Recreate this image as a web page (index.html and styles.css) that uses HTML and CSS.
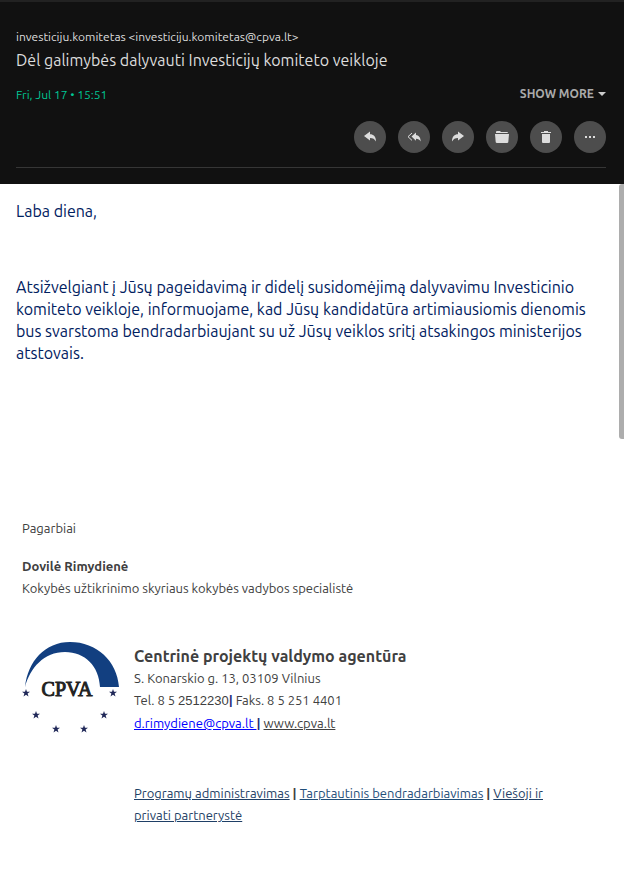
FILE: index.html
```html
<!DOCTYPE html>
<html lang="lt">
<head>
<meta charset="utf-8">
<meta name="viewport" content="width=device-width, initial-scale=1">
<title>Dėl galimybės dalyvauti Investicijų komiteto veikloje</title>
<link rel="stylesheet" href="styles.css">
</head>
<body>
<header class="header">
  <p class="sender">investiciju.komitetas &lt;investiciju.komitetas@cpva.lt&gt;</p>
  <h1 class="subject">Dėl galimybės dalyvauti Investicijų komiteto veikloje</h1>
  <div class="meta">
    <time class="date" datetime="15:51">Fri, Jul 17 • 15:51</time>
    <button class="more" type="button">SHOW MORE <svg width="8" height="4" viewBox="0 0 8 4" aria-hidden="true"><path d="M0 0H8L4 4Z"/></svg></button>
  </div>
  <div class="actions">
    <button class="action" type="button" aria-label="Reply"><svg viewBox="0 0 16 16" aria-hidden="true"><path d="M2 7 8 2.500V5.200C11.500 5.200 14 7.500 14 12.500 12.500 10 11 9 8 9V11.500Z"/></svg></button>
    <button class="action" type="button" aria-label="Reply all"><svg viewBox="0 0 16 16" aria-hidden="true"><path d="M5.500 7.500 10 3.500V6C12.500 6.200 14.500 8 14.800 12.500 13.500 10.500 12.300 9.700 10 9.700V11.700Z"/><path class="chevron" d="M6 4 2 7.700 6 11.400"/></svg></button>
    <button class="action" type="button" aria-label="Forward"><svg viewBox="0 0 16 16" aria-hidden="true"><path d="M14 7 8 2.500V5.200C4.500 5.200 2 7.500 2 12.500 3.500 10 5 9 8 9V11.500Z"/></svg></button>
    <button class="action" type="button" aria-label="Move to folder"><svg viewBox="0 0 16 16" aria-hidden="true"><path d="M2 4V3Q2 2 3 2H6L7 3H13Q14 3 14 4Z"/><path d="M1 5H15L14.300 13Q14.200 14 13 14H3Q1.800 14 1.700 13Z"/></svg></button>
    <button class="action" type="button" aria-label="Delete"><svg viewBox="0 0 16 16" aria-hidden="true"><path d="M3 3H6V2H10V3H13V4H3ZM4 5H12V13Q12 14 11 14H5Q4 14 4 13Z"/></svg></button>
    <button class="action" type="button" aria-label="More actions"><svg viewBox="0 0 16 16" aria-hidden="true"><path d="M3 7H5V9H3ZM7 7H9V9H7ZM11 7H13V9H11Z"/></svg></button>
  </div>
</header>
<main class="message">
  <div class="letter">
    <p>Laba diena,</p>
    <p>Atsižvelgiant į Jūsų pageidavimą ir didelį susidomėjimą dalyvavimu Investicinio komiteto veikloje, informuojame, kad Jūsų kandidatūra artimiausiomis dienomis bus svarstoma bendradarbiaujant su už Jūsų veiklos sritį atsakingos ministerijos atstovais.</p>
  </div>
  <footer class="signature">
    <p class="closing">Pagarbiai</p>
    <p class="name">Dovilė Rimydienė</p>
    <p>Kokybės užtikrinimo skyriaus kokybės vadybos specialistė</p>
    <div class="agency">
      <svg class="logo" viewBox="0 0 98 94" role="img" aria-label="CPVA">
        <defs><path id="star" d="M0-4 1-1.200H4L1.600.600 2.500 3.500 0 1.700-2.500 3.500-1.600.600-4-1.200H-1Z"/></defs>
        <path class="arc" d="M3 46C6 20 23 1 48 1 75 1 95 20 97 46H78C77 25 63 11 43 11 22 11 8 27 3 46Z"/>
        <text class="logo-text" x="45" y="55" text-anchor="middle">CPVA</text>
        <g class="stars"><use href="#star" x="4" y="52"/><use href="#star" x="91" y="52"/><use href="#star" x="14" y="74"/><use href="#star" x="82" y="74"/><use href="#star" x="34" y="88"/><use href="#star" x="62" y="88"/></g>
      </svg>
      <address class="contact">
        <strong class="agency-name">Centrinė projektų valdymo agentūra</strong>
        <span>S. Konarskio g. 13, 03109 Vilnius</span>
        <span>Tel. 8 5 <span class="phone">2512230</span><b class="bar">|</b> Faks. 8 5 251 4401</span>
        <span><a class="email" href="mailto:d.rimydiene@cpva.lt">d.rimydiene@cpva.lt <b class="bar">|</b></a> <a class="site" href="#site">www.cpva.lt</a></span>
      </address>
    </div>
    <nav class="links"><a href="#programu">Programų administravimas</a> <b>|</b> <a class="blue" href="#tarptautinis">Tarptautinis bendradarbiavimas</a> <b>|</b> <a href="#viesoji">Viešoji ir privati partnerystė</a></nav>
  </footer>
  <div class="scroll-thumb"></div>
</main>
</body>
</html>
```
FILE: styles.css
```css
* {
  box-sizing: border-box;
}

body {
  margin: 0;
  background: #fff;
  font-family: Ubuntu, "Noto Sans", sans-serif;
  font-size: 13px;
  line-height: 22px;
}

p,
h1 {
  margin: 0;
}

.header {
  padding: 24px 18px 16px 16px;
  border-top: 2px solid #222;
  background: #111;
  color: #ddd;
}

.sender,
.date,
.more {
  font-size: 12px;
}

.subject {
  margin-top: 1px;
  font-size: 16px;
  font-weight: 400;
}

.meta {
  display: flex;
  align-items: flex-start;
  justify-content: space-between;
  margin-top: 13px;
}

.date {
  color: #00c795;
}

.more {
  display: flex;
  align-items: center;
  gap: 4px;
  padding: 0;
  border: 0;
  background: none;
  color: #aaa;
  font-family: inherit;
  font-weight: 700;
  line-height: 20px;
}

.more svg {
  fill: #ccc;
}

.actions {
  display: flex;
  justify-content: flex-end;
  gap: 12px;
  margin-top: 15px;
  padding-bottom: 14px;
  border-bottom: 1px solid #363636;
}

.action {
  display: grid;
  place-items: center;
  width: 32px;
  height: 32px;
  padding: 0;
  border: 0;
  border-radius: 50%;
  background: #4d4d4d;
}

.action svg {
  width: 16px;
  height: 16px;
  fill: #ddd;
}

.action .chevron {
  fill: none;
  stroke: #ddd;
  stroke-width: 1;
}

.message {
  position: relative;
  padding: 16px 24px 55px 16px;
}

.letter {
  display: grid;
  gap: 54px;
  color: #002060;
  font-size: 16px;
}

.signature {
  margin-top: 153px;
  padding-left: 6px;
  color: #404040;
}

.closing {
  margin-bottom: 16px;
}

.name {
  font-weight: 700;
}

.agency {
  display: flex;
  gap: 14px;
  margin-top: 42px;
}

.logo {
  width: 98px;
  height: 94px;
  flex: none;
}

.arc {
  fill: #123f80;
}

.stars {
  fill: #202858;
}

.logo-text {
  fill: #222;
  stroke: #222;
  stroke-width: 1px;
  font: 400 20px "Liberation Serif", serif;
}

.contact {
  display: flex;
  flex-direction: column;
  padding-top: 4px;
  font-style: normal;
}

.agency-name {
  font-size: 16px;
}

.phone {
  font-family: "Liberation Sans", sans-serif;
}

.bar {
  color: #1f2f7a;
}

.email {
  color: #00f;
}

.site {
  color: #404040;
}

.links {
  margin: 47px 24px 0 112px;
}

.links a {
  color: #1f3f66;
}

.links .blue {
  color: #1f4e79;
}

.scroll-thumb {
  position: absolute;
  top: 0;
  right: 0;
  width: 5px;
  height: 255px;
  border-radius: 3px 0 0 3px;
  background: #adadad;
}
```
